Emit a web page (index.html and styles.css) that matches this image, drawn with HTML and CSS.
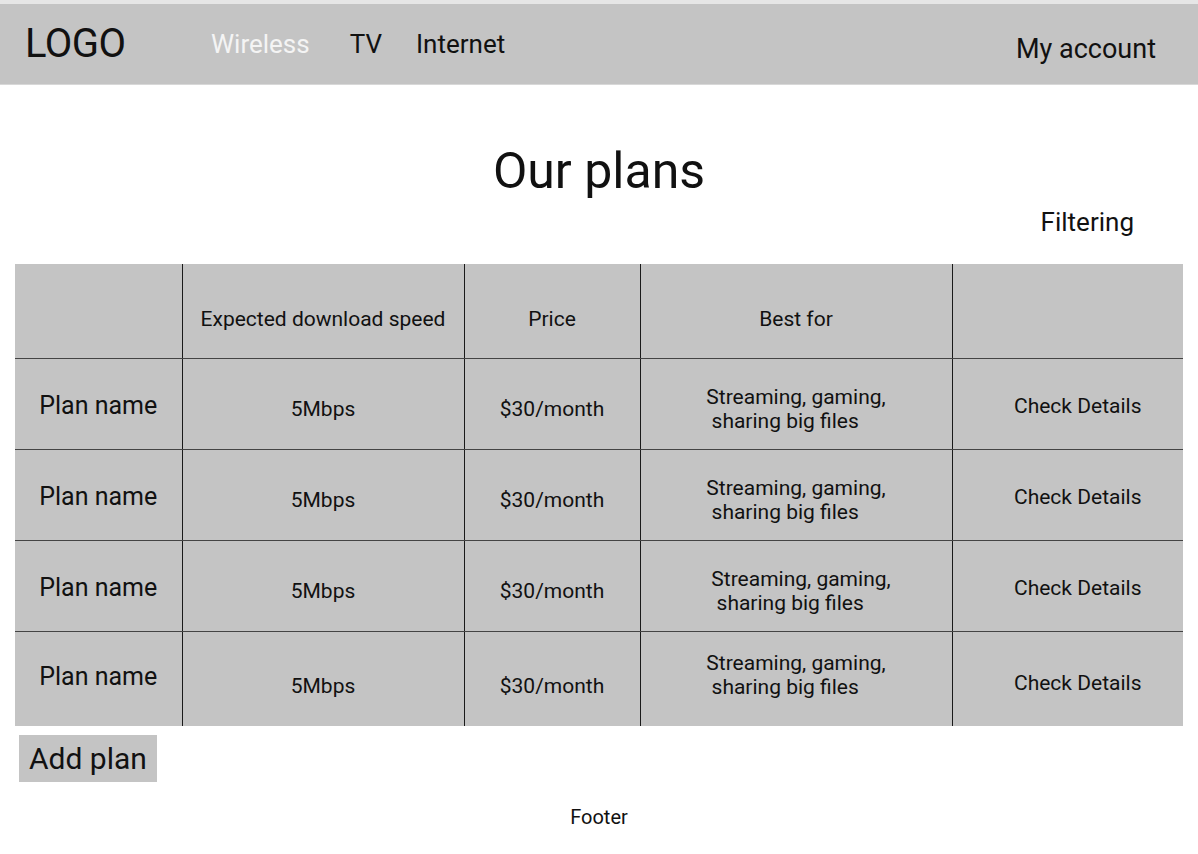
FILE: index.html
```html
<!DOCTYPE html>
<html lang="en">
<head>
<meta charset="utf-8">
<title>Our plans</title>
<link rel="stylesheet" href="styles.css">
</head>
<body>
<div class="topstrip"></div>
<header class="header">
  <div class="logo">LOGO</div>
  <nav class="nav">
    <a class="nav-link active">Wireless</a>
    <a class="nav-link">TV</a>
    <a class="nav-link">Internet</a>
  </nav>
  <a class="account">My account</a>
</header>
<main class="main">
  <h1 class="title">Our plans</h1>
  <div class="filter-row"><span class="filtering">Filtering</span></div>
  <table class="plans">
    <colgroup>
      <col class="c1"><col class="c2"><col class="c3"><col class="c4"><col class="c5">
    </colgroup>
    <thead>
      <tr>
        <th></th>
        <th>Expected download speed</th>
        <th>Price</th>
        <th>Best for</th>
        <th></th>
      </tr>
    </thead>
    <tbody>
      <tr>
        <td class="name">Plan name</td>
        <td class="low">5Mbps</td>
        <td class="low">$30/month</td>
        <td><span class="best">Streaming, gaming,<br>&nbsp;sharing big files</span></td>
        <td class="details">Check Details</td>
      </tr>
      <tr>
        <td class="name">Plan name</td>
        <td class="low">5Mbps</td>
        <td class="low">$30/month</td>
        <td><span class="best">Streaming, gaming,<br>&nbsp;sharing big files</span></td>
        <td class="details">Check Details</td>
      </tr>
      <tr>
        <td class="name">Plan name</td>
        <td class="low">5Mbps</td>
        <td class="low">$30/month</td>
        <td><span class="best shifted">Streaming, gaming,<br>&nbsp;sharing big files</span></td>
        <td class="details">Check Details</td>
      </tr>
      <tr class="last">
        <td class="name">Plan name</td>
        <td class="low">5Mbps</td>
        <td class="low">$30/month</td>
        <td class="bestcell"><span class="best">Streaming, gaming,<br>&nbsp;sharing big files</span></td>
        <td class="details low">Check Details</td>
      </tr>
    </tbody>
  </table>
  <button class="add">Add plan</button>
</main>
<footer class="footer">Footer</footer>
</body>
</html>
```
FILE: styles.css
```css
* { box-sizing: border-box; }
html, body { margin: 0; padding: 0; background: #fff; }
body {
  font-family: Roboto, "Liberation Sans", sans-serif;
  color: #111;
  width: 1198px;
}
.topstrip { height: 4px; background: #e6e6e6; }
.header {
  height: 81px;
  background: #c4c4c4;
  border-bottom: 1px solid #d8d8d8;
  display: flex;
  align-items: flex-start;
  padding: 0 42px 0 25px;
}
.logo {
  font-size: 40px;
  line-height: 47px;
  padding-top: 16px;
  width: 186px;
  letter-spacing: -0.5px;
}
.nav {
  display: flex;
  padding-top: 25px;
  flex: 1;
}
.nav-link {
  font-size: 26px;
  line-height: 30px;
  color: #111;
}
.nav-link.active { color: #f4f4f4; margin-right: 40px; }
.nav-link:nth-child(2) { margin-right: 34px; }
.account {
  font-size: 27px;
  line-height: 30px;
  padding-top: 30px;
  color: #111;
}
.main { padding: 0 15px; }
.title {
  margin: 0;
  text-align: center;
  font-weight: 400;
  font-size: 50px;
  line-height: 58px;
  padding-top: 57px;
}
.filter-row {
  display: flex;
  justify-content: flex-end;
  padding-right: 49px;
  height: 64px;
  padding-top: 7px;
}
.filtering { font-size: 26px; line-height: 30px; }
.plans {
  width: 1168px;
  border-collapse: collapse;
  background: #c4c4c4;
  table-layout: fixed;
}
.c1 { width: 167px; }
.c2 { width: 282px; }
.c3 { width: 176px; }
.c4 { width: 312px; }
.c5 { width: 231px; }
.plans th, .plans td {
  border-left: 1px solid #1a1a1a;
  text-align: center;
  vertical-align: middle;
  padding: 0;
  font-size: 21px;
  font-weight: 400;
  line-height: 24px;
}
.plans th:first-child, .plans td:first-child { border-left: none; }
.plans thead th { height: 94px; border-bottom: 1px solid #444; padding-top: 16px; }
.plans tbody td { height: 91px; border-bottom: 1px solid #444; padding-top: 10px; }
.plans tbody tr.last td { border-bottom: none; height: 95px; padding-top: 0; }
.plans td.name { font-size: 25px; padding-top: 4px; }
.plans tr.last td.name { padding-top: 0; padding-bottom: 4px; }
.plans td.low { padding-top: 10px; }
.plans tr.last td.low { padding-top: 14px; }
.plans tr.last td.bestcell { padding-bottom: 8px; }
.plans td.details { padding-left: 20px; padding-top: 4px; }
.plans tr.last td.details { padding-top: 8px; }
.best {
  display: inline-block;
  text-align: left;
}
.best.shifted { margin-left: 10px; }
.add {
  display: block;
  margin: 9px 0 0 4px;
  border: none;
  background: #c4c4c4;
  font-family: Roboto, "Liberation Sans", sans-serif;
  font-size: 30px;
  line-height: 47px;
  height: 47px;
  padding: 0 10px 0 10px;
  color: #111;
}
.footer {
  text-align: center;
  font-size: 20px;
  line-height: 24px;
  padding-top: 23px;
  color: #111;
}
```
